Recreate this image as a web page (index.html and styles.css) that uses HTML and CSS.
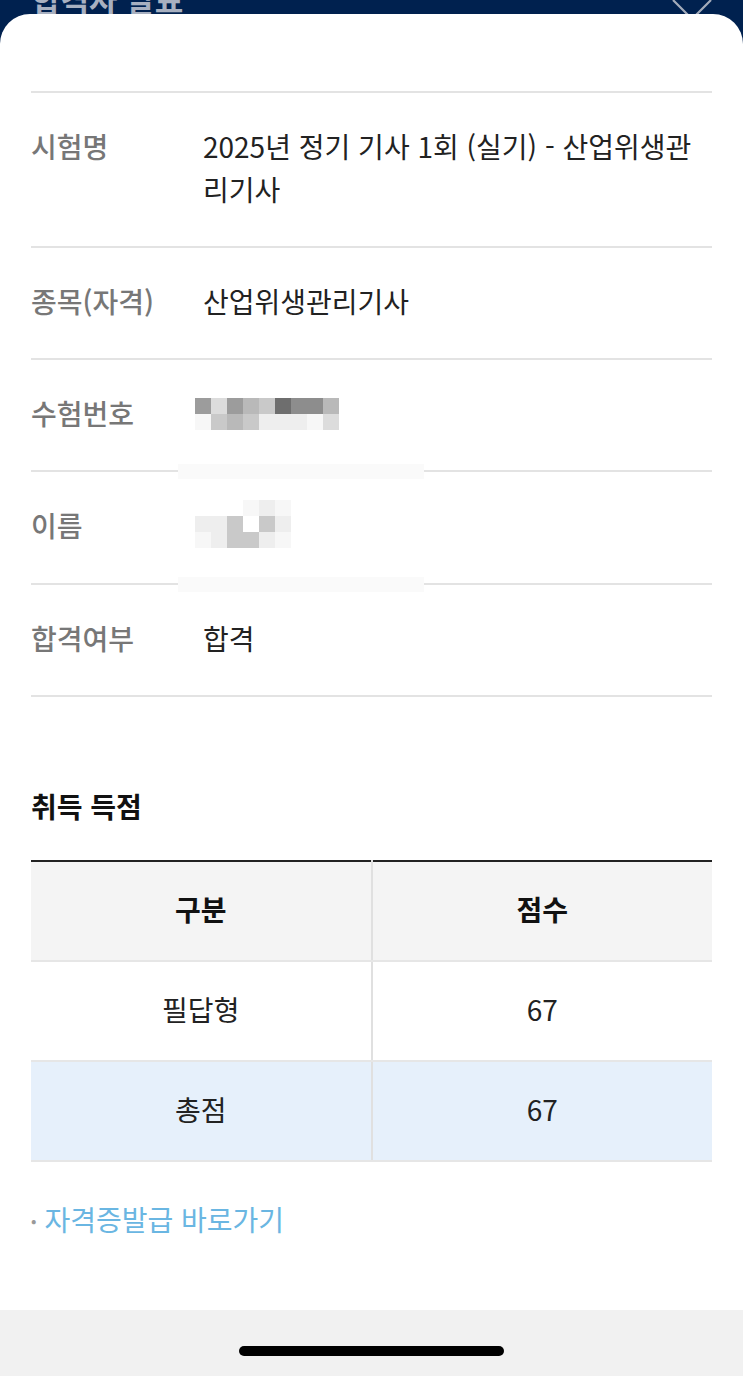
FILE: index.html
```html
<!DOCTYPE html>
<html lang="ko">
<head>
    <meta charset="UTF-8">
    <meta name="viewport" content="width=device-width, initial-scale=1.0">
    <title>합격자 발표</title>
    <link rel="stylesheet" href="styles.css">
</head>
<body>
    <div class="topbar">
        <span class="topbar-title">합격자 발표</span>
        <svg class="close" width="40" height="40" viewBox="0 0 40 40">
            <path d="M1 1 L39 39 M39 1 L1 39" stroke="#a3abba" stroke-width="2.2" fill="none"/>
        </svg>
    </div>

    <div class="sheet">
        <div class="info">
            <div class="row">
                <div class="label">시험명</div>
                <div class="value">2025년 정기 기사 1회 (실기) - 산업위생관리기사</div>
            </div>
            <div class="row">
                <div class="label">종목(자격)</div>
                <div class="value">산업위생관리기사</div>
            </div>
            <div class="row">
                <div class="label">수험번호</div>
                <div class="value">
                    <!-- 모자이크 처리 -->
                    <div class="mosaic wide">
                        <i class="g3"></i><i class="g6"></i><i class="g3"></i><i class="g4"></i><i class="g5"></i><i class="g1"></i><i class="g2"></i><i class="g2"></i><i class="g4"></i>
                        <i class="g8"></i><i class="g5"></i><i class="g4"></i><i class="g5"></i><i class="g7"></i><i class="g7"></i><i class="g7"></i><i class="g8"></i><i class="g6"></i>
                    </div>
                </div>
                <div class="mask"></div>
            </div>
            <div class="row">
                <div class="label">이름</div>
                <div class="value">
                    <div class="mosaic narrow">
                        <i class="g0"></i><i class="g0"></i><i class="g0"></i><i class="g8"></i><i class="g7"></i><i class="g8"></i>
                        <i class="g7"></i><i class="g7"></i><i class="g5"></i><i class="g0"></i><i class="g5"></i><i class="g7"></i>
                        <i class="g8"></i><i class="g7"></i><i class="g5"></i><i class="g5"></i><i class="g7"></i><i class="g8"></i>
                    </div>
                </div>
                <div class="mask"></div>
            </div>
            <div class="row">
                <div class="label">합격여부</div>
                <div class="value">합격</div>
            </div>
        </div>

        <h2 class="section-title">취득 득점</h2>

        <table class="score">
            <thead>
                <tr>
                    <th>구분</th>
                    <th>점수</th>
                </tr>
            </thead>
            <tbody>
                <tr>
                    <td>필답형</td>
                    <td>67</td>
                </tr>
                <tr class="total">
                    <td>총점</td>
                    <td>67</td>
                </tr>
            </tbody>
        </table>

        <a class="link" href="#"><span class="dot">•</span>자격증발급 바로가기</a>
    </div>

    <div class="homebar">
        <div class="indicator"></div>
    </div>
</body>
</html>
```

FILE: styles.css
```css
body {
    margin: 0;
    background: #00214f;
    font-family: "Noto Sans CJK KR", "Noto Sans", sans-serif;
    color: #222;
}
.topbar {
    height: 14px;
    overflow: hidden;
    display: flex;
    justify-content: space-between;
    padding: 0 31px 0 32px;
}
.topbar-title {
    font-size: 31px;
    font-weight: 700;
    line-height: 40px;
    margin-top: -21px;
    color: #a8b0c0;
}
.close {
    margin-top: -1px;
}
.sheet {
    background: #fff;
    border-radius: 30px 30px 0 0;
    height: 1296px;
    padding: 0 31px;
    box-sizing: border-box;
    overflow: hidden;
}
.info {
    margin-top: 77px;
    border-top: 2px solid #e3e3e3;
}
.row {
    position: relative;
    display: flex;
    padding: 32px 0 35px;
    border-bottom: 2px solid #e3e3e3;
    font-size: 28px;
    line-height: 43px;
}
.label {
    width: 172px;
    flex-shrink: 0;
    color: #777;
    font-weight: 500;
}
.value {
    flex: 1;
    color: #222;
}
.mosaic {
    display: grid;
    grid-auto-rows: 16px;
    margin-left: -8px;
}
.mosaic.wide {
    grid-template-columns: repeat(9, 16px);
    margin-top: 6px;
}
.mosaic.narrow {
    grid-template-columns: repeat(6, 16px);
    margin-top: -4px;
}
.mosaic i {
    display: block;
}
.g0 { background: #fff; }
.g1 { background: #6e6e6e; }
.g2 { background: #8d8d8d; }
.g3 { background: #9c9c9c; }
.g4 { background: #b9b9b9; }
.g5 { background: #c9c9c9; }
.g6 { background: #dcdcdc; }
.g7 { background: #eeeeee; }
.g8 { background: #f7f7f7; }
.mask {
    position: absolute;
    left: 147px;
    bottom: -9px;
    width: 246px;
    height: 15px;
    background: #fafafa;
}
.section-title {
    margin: 91px 0 36px;
    font-size: 28px;
    line-height: 36px;
    font-weight: 700;
    color: #111;
}
.score {
    width: 100%;
    border-collapse: collapse;
    border-top: 2px solid #222;
    font-size: 28px;
    table-layout: fixed;
}
.score th, .score td {
    height: 94px;
    padding: 0 0 4px;
    text-align: center;
    border-bottom: 2px solid #e6e6e6;
}
.score th:first-child, .score td:first-child {
    border-right: 2px solid #e0e0e0;
}
.score th {
    background: #f4f4f4;
    font-weight: 700;
    color: #111;
}
.score td {
    color: #222;
}
.score .total td {
    background: #e6f0fb;
}
.link {
    display: block;
    margin-top: 37px;
    font-size: 28px;
    line-height: 40px;
    color: #6ab6e2;
    text-decoration: none;
}
.dot {
    color: #999;
    font-size: 16px;
    margin-right: 8px;
    vertical-align: 4px;
}
.homebar {
    height: 66px;
    background: #f1f1f1;
    display: flex;
    justify-content: center;
}
.indicator {
    width: 265px;
    height: 10px;
    margin-top: 36px;
    border-radius: 5px;
    background: #000;
}
```
